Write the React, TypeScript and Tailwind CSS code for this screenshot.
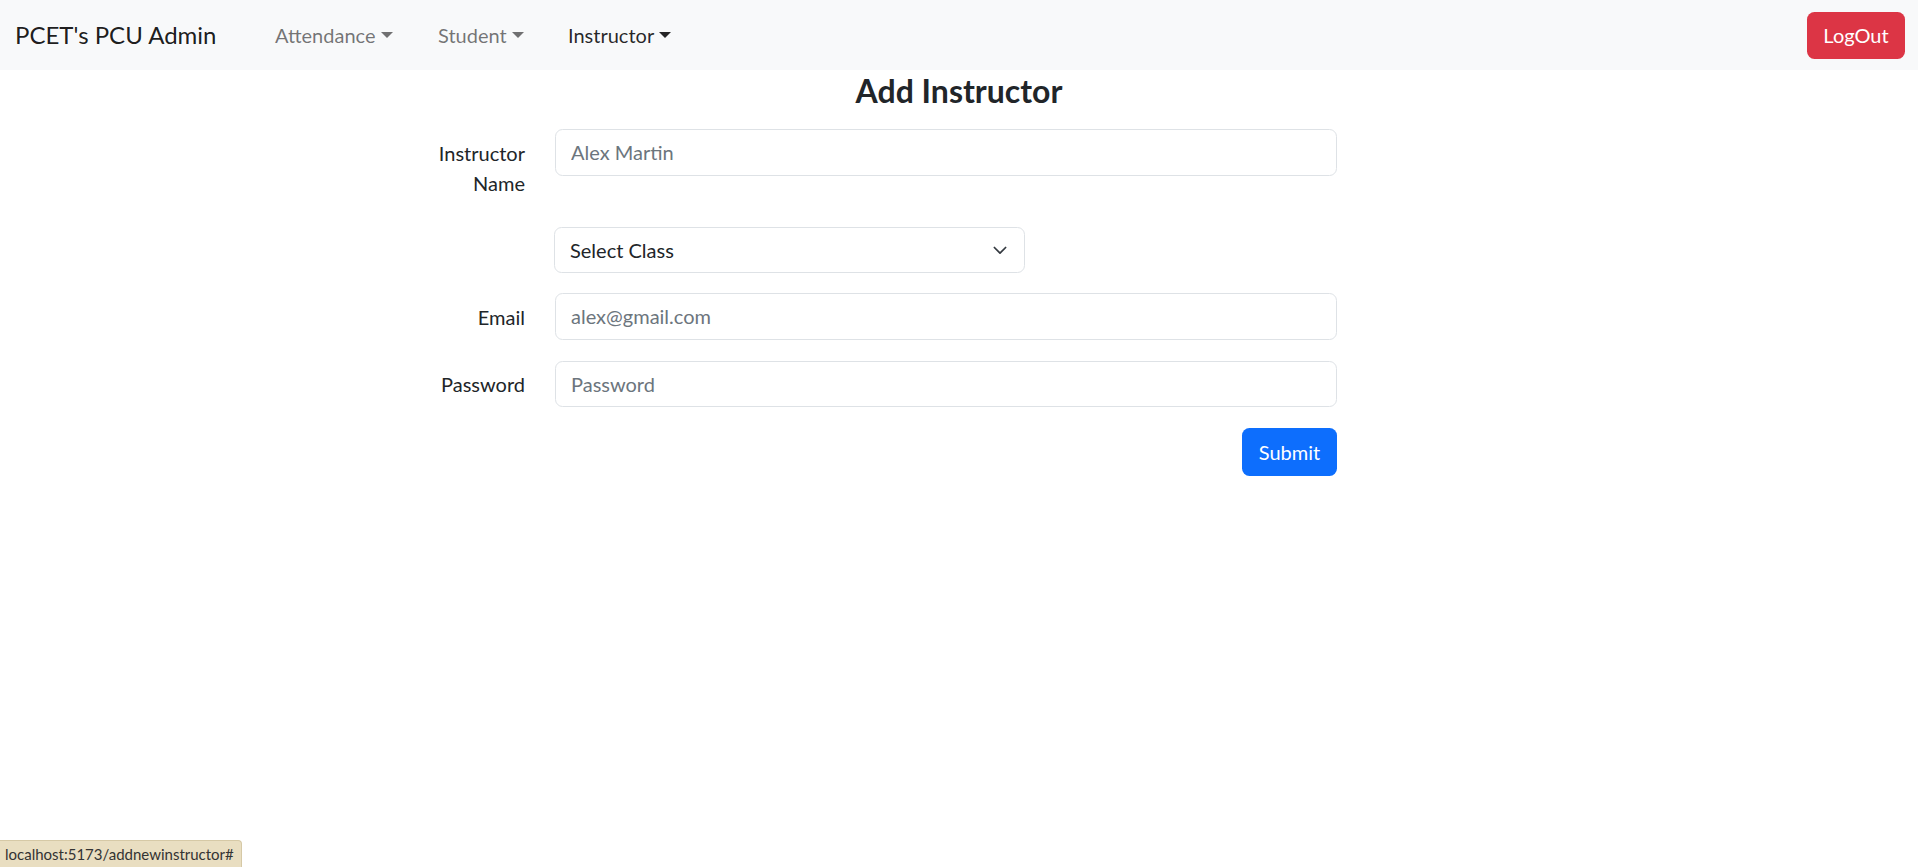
import { useState } from "react";

function Caret() {
  return (
    <span className="ml-[5px] inline-block h-0 w-0 border-x-[6px] border-t-[6px] border-x-transparent border-t-current align-[0.255em]" />
  );
}

function NavItem({ label, active, width }: { label: string; active?: boolean; width: string }) {
  return (
    <li className={width}>
      <a
        href="#"
        className={
          "flex items-center px-[10px] py-[10px] text-[20px] leading-[30px] " +
          (active ? "text-black/85" : "text-black/55")
        }
      >
        {label}
        <Caret />
      </a>
    </li>
  );
}

function Field({
  label,
  placeholder,
  type = "text",
}: {
  label: string;
  placeholder: string;
  type?: string;
}) {
  return (
    <div className="mb-[20px] flex">
      <label className="w-[162px] shrink-0 px-[15px] py-[8.75px] text-right text-[20px] leading-[30px]">
        {label}
      </label>
      <div className="flex-1 px-[15px]">
        <input
          type={type}
          placeholder={placeholder}
          className="block h-[46.5px] w-full rounded-[7.5px] border border-[#dee2e6] bg-white px-[15px] text-[20px] leading-[30px] text-[#212529] outline-none placeholder:text-[#6c757d]"
        />
      </div>
    </div>
  );
}

export default function App() {
  const [cls, setCls] = useState("");
  return (
    <div className="relative min-h-screen bg-white font-['Lato','Noto_Sans',sans-serif] text-[#212529]">
      <nav className="flex h-[70px] items-center bg-[#f8f9fa] pl-[15px] pr-[13px]">
        <a href="#" className="w-[250px] text-[24px] leading-[37.5px] text-black/90">
          PCET's PCU Admin
        </a>
        <ul className="flex">
          <NavItem label="Attendance" width="w-[163px]" />
          <NavItem label="Student" width="w-[130px]" />
          <NavItem label="Instructor" width="w-[130px]" active />
        </ul>
        <button className="ml-auto h-[47px] w-[98px] rounded-[7.5px] bg-[#dc3545] text-[20px] leading-[30px] text-white">
          LogOut
        </button>
      </nav>

      <h3 className="text-center text-[32px] font-bold leading-[42px]">Add Instructor</h3>

      <form className="ml-[378px] mt-[17px] w-[974px]" onSubmit={(e) => e.preventDefault()}>
        <Field label="Instructor Name" placeholder="Alex Martin" />

        <div className="mb-[20px] flex">
          <div className="w-[162px] shrink-0" />
          <div className="flex-1 px-[14px]">
            <div className="relative w-[471px]">
              <select
                value={cls}
                onChange={(e) => setCls(e.target.value)}
                className="block h-[46.5px] w-full appearance-none rounded-[7.5px] border border-[#dee2e6] bg-white pl-[15px] pr-[45px] text-[20px] leading-[30px] text-[#212529] outline-none"
              >
                <option value="">Select Class</option>
                <option value="a">FY</option>
                <option value="b">SY</option>
              </select>
              <svg
                className="pointer-events-none absolute right-[15px] top-[13px] h-[20px] w-[20px]"
                viewBox="0 0 16 16"
                fill="none"
                stroke="#343a40"
                strokeWidth="1.4"
                strokeLinecap="round"
                strokeLinejoin="round"
              >
                <path d="m3.5 6 4.5 4.5 4.5-4.5" />
              </svg>
            </div>
          </div>
        </div>

        <Field label="Email" placeholder="alex@gmail.com" type="email" />
        <Field label="Password" placeholder="Password" type="password" />

        <div className="flex">
          <div className="w-[162px] shrink-0" />
          <div className="flex flex-1 justify-end px-[15px]">
            <button
              type="submit"
              className="h-[47.5px] w-[95px] rounded-[7.5px] bg-[#0d6efd] text-[20px] leading-[30px] text-white"
            >
              Submit
            </button>
          </div>
        </div>
      </form>

      <div className="fixed bottom-0 left-0 flex h-[27px] w-[242px] items-center rounded-tr-[4px] border-t border-r border-[#d6c9a6] bg-[#e9dec1] px-[5px] text-[15px] leading-[20px] text-[#333]">
        localhost:5173/addnewinstructor#
      </div>
    </div>
  );
}
